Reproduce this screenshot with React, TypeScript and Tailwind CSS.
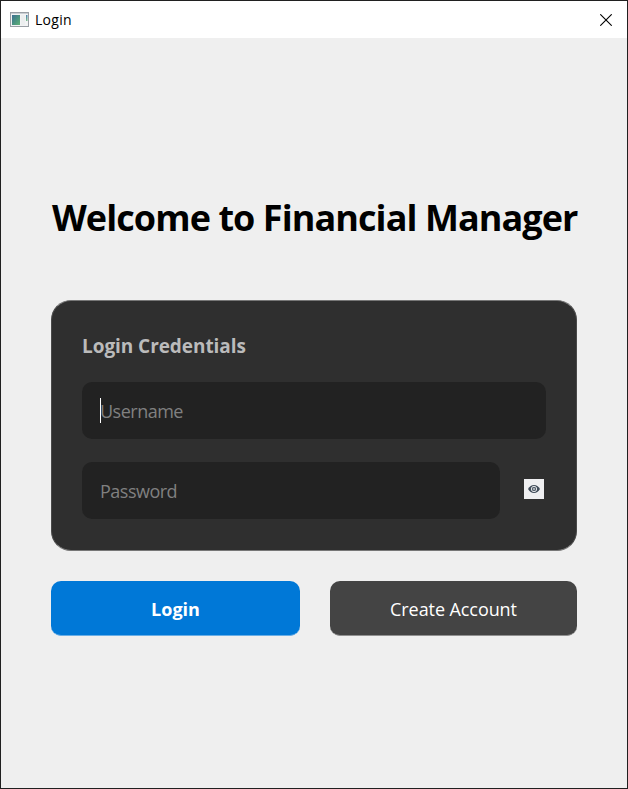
import React from "react";

function WindowIcon() {
  return (
    <svg width="19" height="15" viewBox="0 0 19 15" className="block">
      <defs>
        <linearGradient id="pane" x1="0" y1="0" x2="1" y2="1">
          <stop offset="0" stopColor="#3d6f93" />
          <stop offset="0.55" stopColor="#4b9480" />
          <stop offset="1" stopColor="#62b277" />
        </linearGradient>
        <linearGradient id="strip" x1="0" y1="0" x2="0" y2="1">
          <stop offset="0" stopColor="#4b7fae" />
          <stop offset="1" stopColor="#7cc08c" />
        </linearGradient>
      </defs>
      <rect x="0.5" y="0.5" width="18" height="14" fill="#f2f3f4" stroke="#9a9fa5" />
      <rect x="1" y="1" width="17" height="1" fill="#c9ced3" />
      <rect x="2" y="3" width="8" height="10" fill="url(#pane)" />
      <rect x="11" y="3" width="4" height="10" fill="#eceeef" />
      <rect x="16" y="3" width="1.500" height="6" fill="url(#strip)" />
    </svg>
  );
}

function EyeIcon() {
  return (
    <svg width="12" height="8" viewBox="0 0 12 8" className="block">
      <path d="M0 4C1.600 1.300 3.600 0 6 0s4.400 1.300 6 4c-1.600 2.700-3.600 4-6 4S1.600 6.700 0 4z" fill="#3f4b59" />
      <circle cx="6" cy="4" r="2.700" fill="#3f4b59" stroke="#e2e4e7" strokeWidth="1" />
      <circle cx="6" cy="4" r="1.100" fill="#9aa1a9" stroke="#d3d6da" strokeWidth="0.500" />
    </svg>
  );
}

export default function App() {
  return (
    <div className="flex h-[789px] w-[628px] flex-col overflow-hidden border border-[#202020] bg-[#efefef] font-['Open_Sans','Noto_Sans',sans-serif]">
      <header className="flex h-[37px] shrink-0 items-center bg-white pl-[9px] pr-[15px]">
        <WindowIcon />
        <span className="ml-1.5 text-[14px] leading-5 tracking-[0.3px] text-black">Login</span>
        <button aria-label="Close" className="ml-auto">
          <svg width="12" height="12" viewBox="0 0 12 12" className="block">
            <path d="M0.300 0.300l11.400 11.400M11.700 0.300L0.300 11.700" stroke="#000" strokeWidth="1.100" />
          </svg>
        </button>
      </header>

      <main className="flex flex-col px-[50px] pt-[155px]">
        <h1 className="h-[50px] whitespace-nowrap pl-px text-[36px] font-bold leading-[50px] tracking-[-0.930px] text-black">
          Welcome to Financial Manager
        </h1>

        <section className="mt-[57px] h-[251px] rounded-[20px] border border-x-[#4a4a4a] border-y-[#777] bg-[#2f2f2f] px-[30px] pt-[30px]">
          <h2 className="h-[30px] text-[19px] font-bold leading-[30px] tracking-[-0.060px] text-[#bbb]">Login Credentials</h2>
          <div className="mt-[21px] flex h-[57px] items-center rounded-[10px] bg-[#222] pl-[18px] text-[18px] tracking-[-0.500px] text-[#808080]">
            <span className="-mr-px h-[25px] w-px bg-white" />
            <span className="pt-0.5">Username</span>
          </div>
          <div className="mt-[23px] flex items-center">
            <div className="flex h-[57px] w-[418px] items-center rounded-[10px] bg-[#222] pl-[18px] text-[18px] tracking-[-0.500px] text-[#808080]">
              <span className="pt-0.5">Password</span>
            </div>
            <button aria-label="Show password" className="mb-[3px] ml-6 flex h-5 w-5 items-center justify-center bg-[#efeff1]">
              <EyeIcon />
            </button>
          </div>
        </section>

        <div className="mt-[30px] flex h-[55px] gap-[30px]">
          <button className="w-[249px] rounded-[10px] border-b border-[#69aee6] bg-[#0078d7] pt-[3px] text-[18px] font-bold text-white">Login</button>
          <button className="w-[247px] rounded-[10px] border-b border-[#919191] bg-[#444] pt-[3px] text-[18px] tracking-[-0.080px] text-white">Create Account</button>
        </div>
      </main>
    </div>
  );
}
